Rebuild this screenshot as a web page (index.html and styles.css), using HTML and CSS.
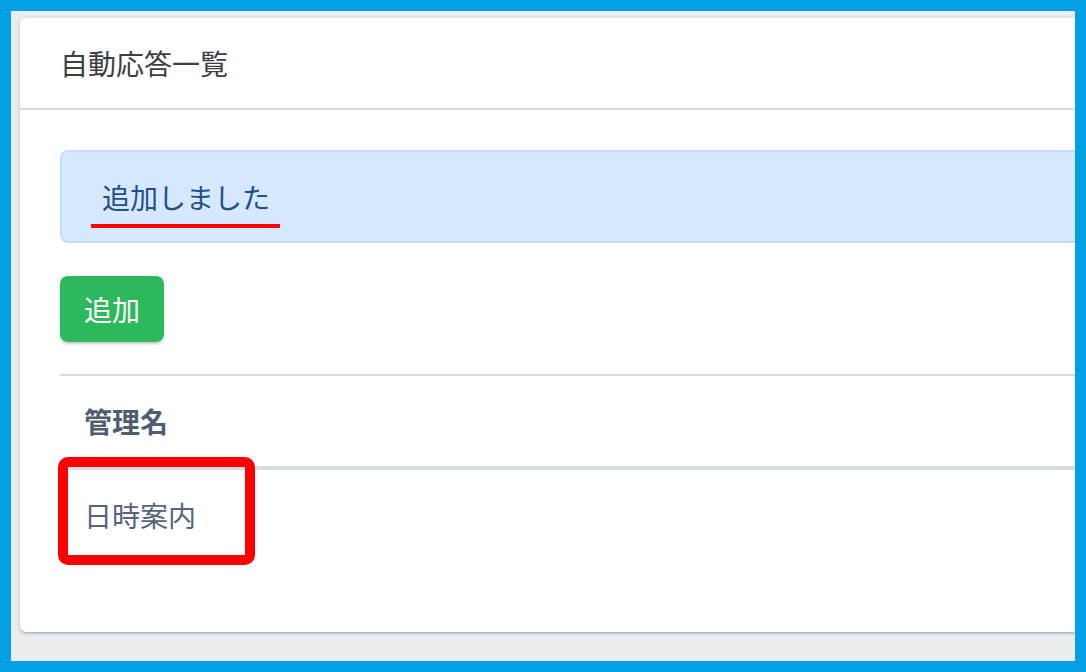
FILE: index.html
```html
<!DOCTYPE html>
<html lang="ja">
<head>
    <meta charset="UTF-8">
    <meta name="viewport" content="width=device-width, initial-scale=1.0">
    <title>自動応答一覧</title>
    <link rel="stylesheet" href="styles.css">
</head>
<body>
    <div class="frame">
        <div class="card">
            <div class="card-header">自動応答一覧</div>
            <div class="card-body">
                <div class="alert">
                    <span class="marked-text">追加しました</span>
                </div>
                <button class="btn-add">追加</button>
                <hr class="divider">
                <table class="list-table">
                    <thead>
                        <tr><th>管理名</th></tr>
                    </thead>
                    <tbody>
                        <tr><td><span class="marked-cell">日時案内</span></td></tr>
                    </tbody>
                </table>
            </div>
        </div>
    </div>
</body>
</html>
```

FILE: styles.css
```css
* {
    margin: 0;
    padding: 0;
    box-sizing: border-box;
}
body {
    font-family: 'Noto Sans CJK JP', 'Noto Sans', sans-serif;
    font-size: 28px;
    line-height: 42px;
    color: #3c4b64;
}
.frame {
    width: 1086px;
    height: 672px;
    border: 11px solid #03a0e6;
    background-color: #ebedef;
    overflow: hidden;
    padding: 7px 0 0 9px;
}
.card {
    width: 1200px;
    background: white;
    border-radius: 6px;
    box-shadow: 0 2px 2px rgba(60, 75, 100, 0.14), 0 3px 1px -2px rgba(60, 75, 100, 0.12), 0 1px 5px rgba(60, 75, 100, 0.2);
}
.card-header {
    padding: 24px 40px;
    color: #3d3d44;
    border-bottom: 2px solid #d8dbe0;
}
.card-body {
    padding: 40px 40px 40px;
}
.alert {
    background-color: #d6e8fd;
    border: 2px solid #c4ddfa;
    border-radius: 8px;
    padding: 24px 40px 23px;
    color: #1e4f8f;
    margin-bottom: 33px;
}
.marked-text {
    position: relative;
}
.marked-text::after {
    content: '';
    position: absolute;
    left: -11px;
    right: -10px;
    bottom: -11px;
    height: 4px;
    background: #ff0000;
}
.btn-add {
    display: block;
    font: inherit;
    color: white;
    background-color: #2eb85c;
    border: none;
    border-radius: 8px;
    padding: 12px 24px;
    box-shadow: 0 2px 3px rgba(60, 75, 100, 0.3);
}
.divider {
    border: none;
    border-top: 2px solid #d8dbe0;
    margin: 32px 0 0;
}
.list-table {
    width: 100%;
    border-collapse: collapse;
    margin-bottom: 32px;
    text-align: left;
}
.list-table th {
    font-weight: bold;
    padding: 24px;
    border-bottom: 4px solid #d8dbe0;
    color: #4f5d73;
}
.list-table td {
    padding: 24px;
    color: #56637a;
}
.marked-cell {
    position: relative;
}
.marked-cell::before {
    content: '';
    position: absolute;
    left: -26px;
    top: -38px;
    width: 177px;
    height: 88px;
    border: 10px solid #ff0000;
    border-radius: 10px;
}
```
